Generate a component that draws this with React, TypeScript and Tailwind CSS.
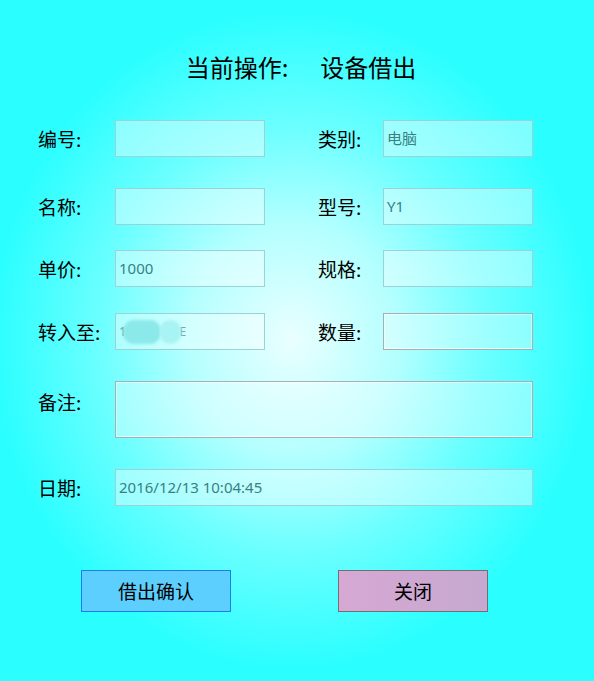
import React from "react";

const cjk = { fontFamily: '"Noto Sans CJK SC", "Noto Sans", sans-serif' };
const latin = { fontFamily: '"Noto Sans", "Noto Sans CJK SC", sans-serif' };

function Label({ text, w }: { text: string; w: string }) {
  return (
    <div className={`${w} h-[37px] flex items-center text-[19px] text-black leading-none`} style={cjk}>
      {text}
    </div>
  );
}

function Box({
  value,
  w = "w-[150px]",
  h = "h-[37px]",
  active = false,
  children,
}: {
  value?: string;
  w?: string;
  h?: string;
  active?: boolean;
  children?: React.ReactNode;
}) {
  return (
    <div
      className={`${w} ${h} border flex items-center pl-[3px] text-[15px] text-[#3a7f82] ${
        active
          ? "border-[#abadb3] bg-white/35 shadow-[inset_0_0_0_1px_rgba(255,255,255,0.55)]"
          : "border-[#9cd2d6] bg-white/40"
      }`}
      style={latin}
    >
      {value}
      {children}
    </div>
  );
}

export default function App() {
  return (
    <div
      className="w-[594px] h-[681px] overflow-hidden bg-[radial-gradient(ellipse_300px_330px_at_292px_340px,#eaffff_0%,#b4ffff_35%,#6affff_65%,#2afeff_100%)] bg-[#2afeff]"
      style={cjk}
    >
      <div className="pt-[51px] pl-[8px] flex justify-center text-[24px] leading-[32px] text-black">
        <span>当前操作:</span>
        <span className="ml-[32px]">设备借出</span>
      </div>

      <div className="pl-[38px] mt-[37px] flex flex-col">
        <div className="flex items-start">
          <Label text="编号:" w="w-[77px]" />
          <Box />
          <div className="w-[53px]" />
          <Label text="类别:" w="w-[65px]" />
          <Box value="电脑" />
        </div>

        <div className="flex items-start mt-[31px]">
          <Label text="名称:" w="w-[77px]" />
          <Box />
          <div className="w-[53px]" />
          <Label text="型号:" w="w-[65px]" />
          <Box value="Y1" />
        </div>

        <div className="flex items-start mt-[25px]">
          <Label text="单价:" w="w-[77px]" />
          <Box value="1000" />
          <div className="w-[53px]" />
          <Label text="规格:" w="w-[65px]" />
          <Box />
        </div>

        <div className="flex items-start mt-[26px]">
          <Label text="转入至:" w="w-[77px]" />
          <Box>
            <div className="flex items-center">
              <span className="text-[13px] text-[#5a9598]">1</span>
              <div className="w-[38px] h-[24px] rounded-[11px] bg-[#8be9ea] blur-[1.5px] -ml-[3px]" />
              <div className="w-[21px] h-[24px] rounded-[10px] bg-[#a8f3f3] blur-[1.5px] -ml-[1px]" />
              <span className="text-[12px] text-[#7aa4a6] -ml-[2px]">E</span>
            </div>
          </Box>
          <div className="w-[53px]" />
          <Label text="数量:" w="w-[65px]" />
          <Box active />
        </div>

        <div className="flex items-start mt-[31px]">
          <div className="w-[77px] h-[40px] flex items-center text-[19px] leading-none">备注:</div>
          <Box w="w-[418px]" h="h-[57px]" active />
        </div>

        <div className="flex items-start mt-[31px]">
          <Label text="日期:" w="w-[77px]" />
          <Box w="w-[418px]" value="2016/12/13 10:04:45" />
        </div>
      </div>

      <div className="flex pl-[81px] mt-[64px]">
        <button className="w-[150px] h-[42px] border border-[#1b80e4] bg-[#5ccfff] text-[19px] text-black flex items-center justify-center">
          借出确认
        </button>
        <button className="ml-[107px] w-[150px] h-[42px] border border-[#707070] bg-[linear-gradient(90deg,#d6a8d4,#c6a9d0)] text-[19px] text-black flex items-center justify-center">
          关闭
        </button>
      </div>
    </div>
  );
}
